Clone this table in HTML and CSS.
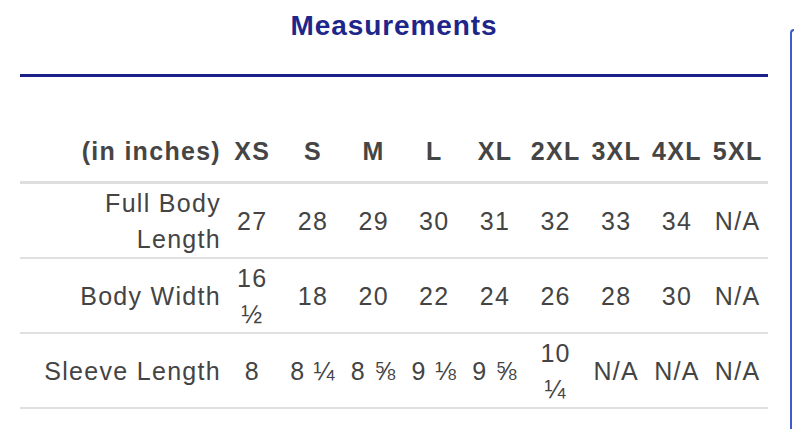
FILE: index.html
```html
<!DOCTYPE html>
<html lang="en">
<head>
<meta charset="utf-8">
<title>Measurements</title>
<link rel="stylesheet" href="styles.css">
</head>
<body>
<div class="page">
  <main class="content">
    <h2 class="title">Measurements</h2>
    <hr class="rule">
    <table class="sizes">
      <colgroup>
        <col class="col-label">
        <col><col><col><col><col><col><col><col><col>
      </colgroup>
      <thead>
        <tr>
          <th class="label">(in inches)</th>
          <th>XS</th><th>S</th><th>M</th><th>L</th><th>XL</th><th>2XL</th><th>3XL</th><th>4XL</th><th>5XL</th>
        </tr>
      </thead>
      <tbody>
        <tr>
          <td class="label">Full Body Length</td>
          <td>27</td><td>28</td><td>29</td><td>30</td><td>31</td><td>32</td><td>33</td><td>34</td><td>N/A</td>
        </tr>
        <tr>
          <td class="label">Body Width</td>
          <td>16 ½</td><td>18</td><td>20</td><td>22</td><td>24</td><td>26</td><td>28</td><td>30</td><td>N/A</td>
        </tr>
        <tr>
          <td class="label">Sleeve Length</td>
          <td>8</td><td>8 ¼</td><td>8 ⅝</td><td>9 ⅛</td><td>9 ⅝</td><td>10 ¼</td><td>N/A</td><td>N/A</td><td>N/A</td>
        </tr>
      </tbody>
    </table>
  </main>
  <aside class="side-panel"></aside>
</div>
</body>
</html>
```

FILE: styles.css
```css
html, body {
  margin: 0;
  padding: 0;
  height: 100%;
  overflow: hidden;
  background: #ffffff;
}

body {
  font-family: "Liberation Sans", Arial, Helvetica, sans-serif;
  color: #444444;
}

.page {
  display: flex;
  height: 100vh;
  align-items: stretch;
}

.content {
  width: 748px;
  flex: 0 0 748px;
  padding: 0 22px 0 20px;
}

.title {
  margin: 9px 0 0;
  font-size: 28px;
  line-height: 34px;
  font-weight: bold;
  letter-spacing: 0.9px;
  text-align: center;
  color: #1f268a;
}

.rule {
  margin: 31px 0 0;
  height: 3px;
  border: 0;
  background: #1c1f88;
}

.sizes {
  width: 748px;
  margin-top: 56px;
  border-collapse: collapse;
  table-layout: fixed;
  font-size: 25px;
  line-height: 36px;
  letter-spacing: 1.3px;
}

.col-label {
  width: 202px;
}

.sizes th {
  font-weight: bold;
  padding: 0 4px 12px;
  text-align: center;
  vertical-align: bottom;
  color: #454545;
  border-bottom: 3px solid #dedede;
  white-space: nowrap;
}

.sizes td {
  padding: 1px 4px 0;
  text-align: center;
  vertical-align: middle;
  color: #444444;
  border-bottom: 2px solid #e0e0e0;
  height: 72px;
}

.sizes .label {
  text-align: right;
  padding-left: 10px;
  padding-right: 1px;
}

.side-panel {
  flex: 1 1 auto;
  margin-top: 29px;
  border-top: 2px solid #3f5ccc;
  border-left: 2px solid #3f5ccc;
  border-top-left-radius: 10px;
}
```
